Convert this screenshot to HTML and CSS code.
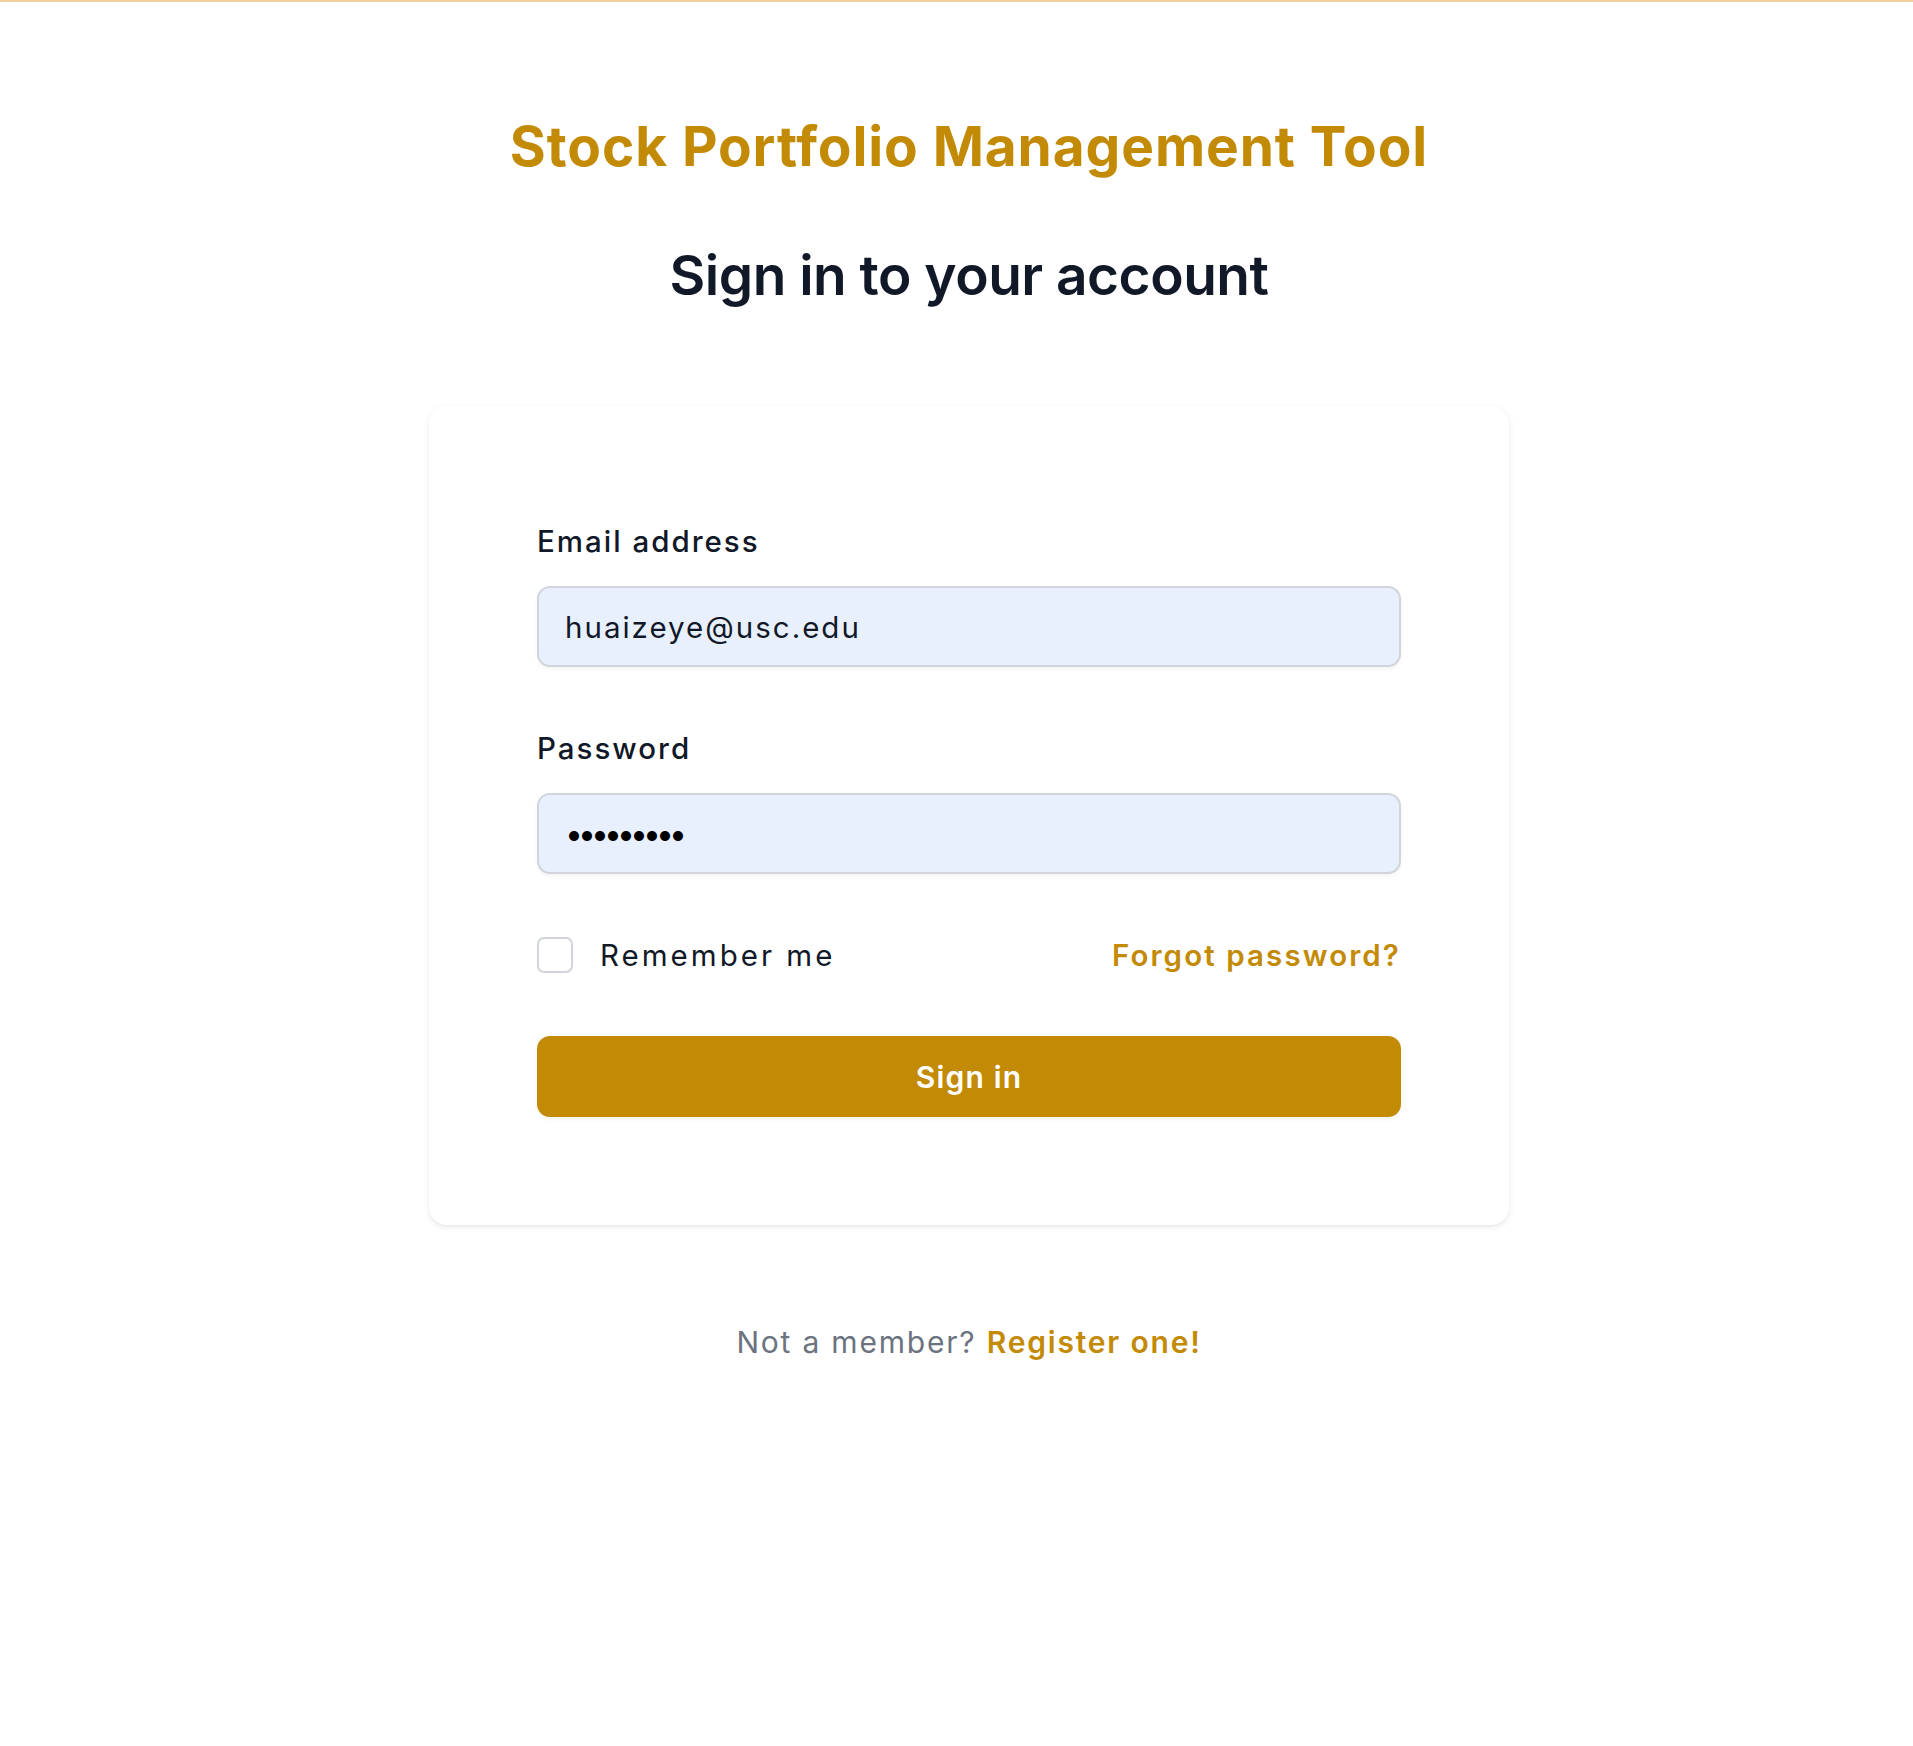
FILE: index.html
```html
<!DOCTYPE html>
<html lang="en">
<head>
<meta charset="utf-8">
<title>Sign in</title>
<link rel="stylesheet" href="styles.css">
</head>
<body>
<div class="topbar"></div>
<main class="page">
  <header class="head">
    <h1 class="brand">Stock Portfolio Management Tool</h1>
    <h2 class="heading">Sign in to your account</h2>
  </header>
  <div class="card">
    <form class="form">
      <div class="field">
        <label class="label" for="email">Email address</label>
        <input class="input" id="email" type="email" value="huaizeye@usc.edu">
      </div>
      <div class="field">
        <label class="label" for="password">Password</label>
        <input class="input input-pw" id="password" type="password" value="123456789">
      </div>
      <div class="row">
        <label class="remember">
          <input class="check" type="checkbox">
          <span class="remember-text">Remember me</span>
        </label>
        <a class="forgot" href="#">Forgot password?</a>
      </div>
      <button class="btn" type="button">Sign in</button>
    </form>
  </div>
  <p class="footer">Not a member? <a class="register" href="#">Register one!</a></p>
</main>
</body>
</html>
```

FILE: styles.css
```css
* { box-sizing: border-box; }
html, body { margin: 0; padding: 0; background: #ffffff; }
body {
  font-family: Inter, "Noto Sans", "Liberation Sans", sans-serif;
  color: #111827;
}
.topbar {
  height: 2px;
  background: #f1cf9c;
}
.page {
  display: flex;
  flex-direction: column;
  align-items: center;
  padding-left: 25px;
  padding-top: 108px;
}
.head {
  display: flex;
  flex-direction: column;
  align-items: center;
  gap: 57px;
}
.brand {
  margin: 0;
  font-size: 55px;
  line-height: 72px;
  font-weight: 700;
  color: #c38a06;
  letter-spacing: 0.9px;
}
.heading {
  margin: 0;
  font-size: 55px;
  line-height: 72px;
  font-weight: 600;
  color: #111827;
  letter-spacing: -0.5px;
}
.card {
  margin-top: 95px;
  width: 1080px;
  padding: 108px;
  background: #fff;
  border-radius: 18px;
  box-shadow: 0 2px 7px rgba(0, 0, 0, 0.08), 0 2px 4px -2px rgba(0, 0, 0, 0.07);
}
.form {
  display: flex;
  flex-direction: column;
  gap: 54px;
}
.field {
  display: flex;
  flex-direction: column;
  gap: 18px;
}
.label {
  font-size: 29.5px;
  line-height: 54px;
  font-weight: 500;
  color: #111827;
  letter-spacing: 2px;
}
.input {
  display: block;
  width: 100%;
  height: 81px;
  padding: 0 26px;
  border: 2px solid #d1d5db;
  border-radius: 13px;
  background: #e8f0fe;
  font-family: inherit;
  font-size: 29.5px;
  letter-spacing: 2px;
  color: #111827;
  box-shadow: 0 2px 4px rgba(0, 0, 0, 0.05);
  outline: none;
}
.input-pw {
  font-size: 32px;
  letter-spacing: -5px;
  color: #000;
}
.row {
  display: flex;
  align-items: center;
  justify-content: space-between;
  height: 54px;
}
.remember {
  display: flex;
  align-items: center;
  gap: 27px;
}
.check {
  appearance: none;
  -webkit-appearance: none;
  margin: 0;
  width: 36px;
  height: 36px;
  border: 2px solid #d1d5db;
  border-radius: 7px;
  background: #fff;
}
.remember-text {
  font-size: 29.5px;
  line-height: 54px;
  color: #111827;
  letter-spacing: 3px;
}
.forgot {
  font-size: 29.5px;
  line-height: 54px;
  font-weight: 600;
  color: #c38a06;
  text-decoration: none;
  letter-spacing: 2.1px;
}
.btn {
  display: flex;
  align-items: center;
  justify-content: center;
  width: 100%;
  height: 81px;
  border: 0;
  border-radius: 13px;
  background: #c38a06;
  color: #fff;
  font-family: inherit;
  font-size: 30px;
  font-weight: 600;
  letter-spacing: 1.2px;
  box-shadow: 0 2px 4px rgba(0, 0, 0, 0.06);
}
.footer {
  margin: 90px 0 0;
  font-size: 30px;
  line-height: 54px;
  color: #6b7280;
  letter-spacing: 1.8px;
}
.register {
  font-weight: 600;
  color: #c38a06;
  text-decoration: none;
}
```
